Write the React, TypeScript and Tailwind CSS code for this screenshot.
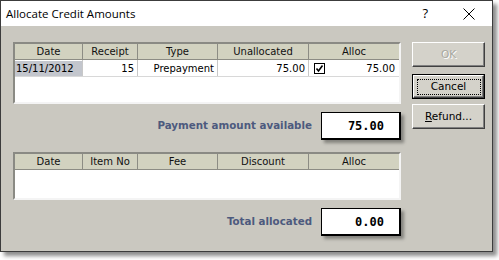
import React from 'react';

const cellFont = { fontFamily: '"DejaVu Sans", sans-serif' };

const HeaderCell: React.FC<{ w?: string; label: string; last?: boolean }> = ({ w, label, last }) => (
  <div
    className={`${w ?? 'flex-1'} h-full flex items-center justify-center text-[10px] text-[#101010] ${
      last ? '' : 'border-r border-[#8c8c84]'
    }`}
  >
    {label}
  </div>
);

const ValueBox: React.FC<{ value: string }> = ({ value }) => (
  <div className="w-[80px] h-[28px] bg-white border border-black border-r-2 border-b-2 shadow-[3px_3px_3px_rgba(0,0,0,0.35)] flex items-center justify-end pr-[15px]">
    <span
      className="text-[12px] font-bold text-black"
      style={{ fontFamily: '"DejaVu Sans Mono", monospace' }}
    >
      {value}
    </span>
  </div>
);

const WinButton: React.FC<{ children: React.ReactNode; isDefault?: boolean; disabled?: boolean; className?: string }> = ({
  children,
  isDefault,
  disabled,
  className,
}) => (
  <div className={`h-[25px] w-[73px] ${isDefault ? 'border border-black' : ''} ${className ?? ''}`}>
    <div className="h-full w-full border border-t-white border-l-white border-r-[#404040] border-b-[#404040] shadow-[inset_-1px_-1px_0_#808080] bg-[#d4d2ca] flex items-center justify-center">
      <div
        className={`flex items-center justify-center text-[10.5px] ${
          isDefault ? 'border border-dotted border-black px-[12px] h-[16px] w-[64px]' : ''
        } ${disabled ? 'text-[#a8a8a0] [text-shadow:1px_1px_0_#ffffff]' : 'text-black'}`}
        style={cellFont}
      >
        {children}
      </div>
    </div>
  </div>
);

export default function App() {
  return (
    <div className="w-[499px] h-[260px] bg-white">
      <div className="w-[493px] h-[252px] border border-[#3c3c3c] flex flex-col shadow-[4px_4px_4px_rgba(0,0,0,0.45)]">
        {/* Title bar */}
        <div className="h-[25px] bg-white flex items-center pl-[5px] shrink-0">
          <span className="text-[11.5px] text-black" style={{ fontFamily: '"Open Sans", sans-serif' }}>
            Allocate Credit Amounts
          </span>
          <span className="ml-auto text-[13px] text-black mr-[35px]" style={{ fontFamily: '"Open Sans", sans-serif' }}>
            ?
          </span>
          <svg width="12" height="12" viewBox="0 0 12 12" className="mr-[17px]">
            <path d="M0.5 0.5 L11.5 11.5 M11.5 0.5 L0.5 11.5" stroke="#000" strokeWidth="1" />
          </svg>
        </div>

        {/* Body */}
        <div className="flex-1 bg-[#cac8c0] pt-[16px] pl-[12px] flex" style={cellFont}>
          <div className="w-[388px] flex flex-col">
            {/* Receipts grid */}
            <div className="h-[62px] bg-white border-2 border-t-[#8a8a84] border-l-[#8a8a84] border-r-[#f4f4f4] border-b-[#f4f4f4] flex flex-col">
              <div className="h-[16px] bg-[#d2d2c0] border-b border-[#8c8c84] flex">
                <HeaderCell w="w-[68px]" label="Date" />
                <HeaderCell w="w-[55px]" label="Receipt" />
                <HeaderCell w="w-[80px]" label="Type" />
                <HeaderCell w="w-[91px]" label="Unallocated" />
                <HeaderCell label="Alloc" last />
              </div>
              <div className="h-[17px] flex border-b border-[#d8d8d8] text-[10px] text-black">
                <div className="w-[68px] border-r border-[#c8c8c8] flex items-center">
                  <div className="w-[67px] h-[15px] bg-[#c3c6cd] flex items-center pl-[1px]">15/11/2012</div>
                </div>
                <div className="w-[55px] border-r border-[#c8c8c8] flex items-center justify-end pr-[3px]">15</div>
                <div className="w-[80px] border-r border-[#c8c8c8] flex items-center justify-end pr-[3px]">Prepayment</div>
                <div className="w-[91px] border-r border-[#c8c8c8] flex items-center justify-end pr-[3px]">75.00</div>
                <div className="flex-1 flex items-center pl-[5px] pr-[4px]">
                  <div className="w-[11px] h-[11px] border border-black flex items-center justify-center">
                    <svg width="9" height="9" viewBox="0 0 9 9">
                      <path d="M1.5 4.5 L3.5 7 L7.5 1.5" stroke="#000" strokeWidth="1.6" fill="none" />
                    </svg>
                  </div>
                  <span className="ml-auto">75.00</span>
                </div>
              </div>
            </div>

            {/* Payment amount available */}
            <div className="mt-[8px] flex items-center justify-end">
              <span className="text-[10.3px] font-bold text-[#4d5a7e] mr-[9px]">Payment amount available</span>
              <ValueBox value="75.00" />
            </div>

            {/* Fees grid */}
            <div className="mt-[12px] h-[48px] bg-white border-2 border-t-[#8a8a84] border-l-[#8a8a84] border-r-[#f4f4f4] border-b-[#f4f4f4] flex flex-col">
              <div className="h-[16px] bg-[#d2d2c0] border-b border-[#8c8c84] flex">
                <HeaderCell w="w-[68px]" label="Date" />
                <HeaderCell w="w-[55px]" label="Item No" />
                <HeaderCell w="w-[80px]" label="Fee" />
                <HeaderCell w="w-[91px]" label="Discount" />
                <HeaderCell label="Alloc" last />
              </div>
            </div>

            {/* Total allocated */}
            <div className="mt-[8px] flex items-center justify-end">
              <span className="text-[10.3px] font-bold text-[#4d5a7e] mr-[9px]">Total allocated</span>
              <ValueBox value="0.00" />
            </div>
          </div>

          {/* Buttons */}
          <div className="ml-[11px] flex flex-col">
            <WinButton disabled>OK</WinButton>
            <WinButton isDefault className="mt-[7px]">
              Cancel
            </WinButton>
            <WinButton className="mt-[5px]">
              <span>
                <span className="underline">R</span>efund...
              </span>
            </WinButton>
          </div>
        </div>
      </div>
    </div>
  );
}
